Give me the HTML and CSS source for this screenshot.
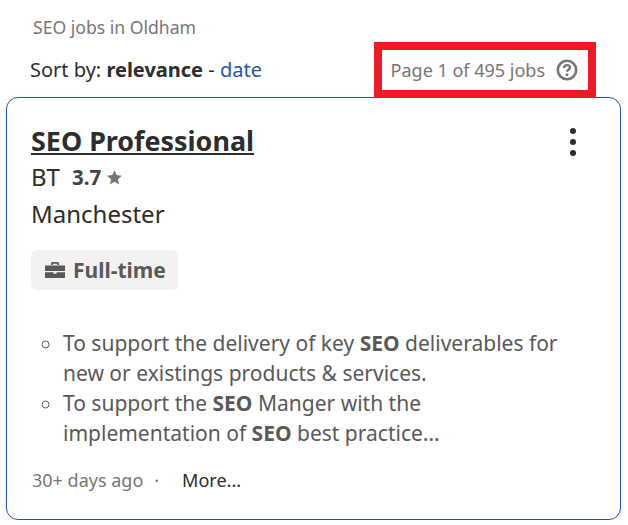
FILE: index.html
```html
<!DOCTYPE html>
<html lang="en">
<head>
    <meta charset="UTF-8">
    <meta name="viewport" content="width=device-width, initial-scale=1.0">
    <title>SEO jobs in Oldham</title>
    <link rel="stylesheet" href="styles.css">
</head>
<body>
    <div class="results">
        <div class="heading">SEO jobs in Oldham</div>
        <div class="toolbar">
            <div class="sort">Sort by: <b>relevance</b> - <a href="#">date</a></div>
            <div class="count">
                <span>Page 1 of 495 jobs</span>
                <svg class="help" width="22" height="22" viewBox="0 0 22 22">
                    <circle cx="11" cy="11" r="9.200" fill="none" stroke="#767676" stroke-width="2.600"/>
                    <path d="M8 8.900c0-1.800 1.300-2.800 3-2.800s3 1 3 2.500c0 2.200-3 2.200-3 4.100" fill="none" stroke="#767676" stroke-width="2.400"/>
                    <circle cx="11" cy="15.800" r="1.500" fill="#767676"/>
                </svg>
            </div>
        </div>
        <div class="card">
            <div class="card-top">
                <h2 class="title"><a href="#">SEO Professional</a></h2>
                <div class="menu"><i></i><i></i><i></i></div>
            </div>
            <div class="company">
                <span>BT</span>
                <span class="rating">3.7</span>
                <svg class="star" width="15" height="15" viewBox="0 0 15 15">
                    <path d="M7.500 0.300l2.200 4.800 5.200 0.600-3.900 3.500 1.100 5.200-4.600-2.600-4.600 2.600 1.100-5.200-3.900-3.500 5.200-0.600z" fill="#767676"/>
                </svg>
            </div>
            <div class="location">Manchester</div>
            <div class="tag">
                <svg width="22" height="18" viewBox="0 0 22 18">
                    <path d="M7 4V2.500C7 1.700 7.700 1 8.500 1h5C14.300 1 15 1.700 15 2.500V4h-1.800V2.800H8.800V4z" fill="#595959"/>
                    <path d="M1 4.500h20V10H1z" fill="#595959"/>
                    <path d="M1 11.200h8.500v1.500h3v-1.500H21V17H1z" fill="#595959"/>
                </svg>
                <span>Full-time</span>
            </div>
            <ul class="snippet">
                <li>To support the delivery of key <b>SEO</b> deliverables for new or existings products &amp; services.</li>
                <li>To support the <b>SEO</b> Manger with the implementation of <b>SEO</b> best practice...</li>
            </ul>
            <div class="footer">
                <span class="age">30+ days ago</span>
                <span class="dot">·</span>
                <a class="more" href="#">More...</a>
            </div>
        </div>
    </div>
</body>
</html>
```

FILE: styles.css
```css
body {
    margin: 0;
    font-family: "Noto Sans", sans-serif;
    background: #fff;
    color: #2d2d2d;
}
.results {
    padding: 15px 7px 0 6px;
}
.heading {
    font-size: 17.6px;
    line-height: 24px;
    color: #767676;
    padding-left: 27px;
}
.toolbar {
    display: flex;
    justify-content: space-between;
    align-items: center;
    height: 56px;
    margin-top: 3px;
    margin-bottom: -1px;
    padding-left: 24px;
    padding-right: 25px;
}
.sort {
    font-size: 20px;
    line-height: 26px;
}
.sort a {
    color: #2557a7;
    text-decoration: none;
}
.count {
    display: flex;
    align-items: center;
    gap: 11px;
    height: 40px;
    padding: 0 10px 0 9px;
    border: 8px solid #ed1c24;
    font-size: 18px;
    color: #767676;
}
.card {
    border: 1px solid #2557a7;
    border-radius: 12px;
    padding: 24px;
    height: 423px;
    box-sizing: border-box;
    box-shadow: 0 2px 6px rgba(0, 0, 0, 0.08);
}
.card-top {
    display: flex;
    justify-content: space-between;
}
.title {
    margin: 0;
    font-size: 26.9px;
    line-height: 38px;
    font-weight: 700;
}
.title a {
    color: #2d2d2d;
}
.menu {
    display: flex;
    flex-direction: column;
    gap: 5px;
    padding: 6px 20px 0 0;
}
.menu i {
    width: 6px;
    height: 6px;
    border-radius: 50%;
    background: #2d2d2d;
}
.company {
    display: flex;
    align-items: center;
    margin-top: 1px;
    font-size: 24px;
    line-height: 32px;
}
.rating {
    font-size: 20.5px;
    font-weight: 700;
    color: #424242;
    margin-left: 12px;
}
.star {
    margin-left: 6px;
}
.location {
    font-size: 24px;
    line-height: 36px;
    margin-top: 3px;
}
.tag {
    display: inline-flex;
    align-items: center;
    gap: 7px;
    margin-top: 18px;
    height: 40px;
    padding: 0 12px 0 13px;
    border-radius: 6px;
    background: #f3f2f1;
    font-size: 21px;
    font-weight: 700;
    color: #595959;
}
.snippet {
    margin: 38px 36px 0 0;
    padding: 0 0 0 32px;
    list-style: circle;
    font-size: 21px;
    line-height: 30px;
    color: #595959;
}
.footer {
    display: flex;
    align-items: center;
    margin-top: 20px;
    font-size: 18px;
    line-height: 24px;
    padding-left: 1px;
}
.age {
    color: #767676;
}
.dot {
    color: #767676;
    margin: 0 23px 0 11px;
}
.more {
    color: #2d2d2d;
    text-decoration: none;
}
```
